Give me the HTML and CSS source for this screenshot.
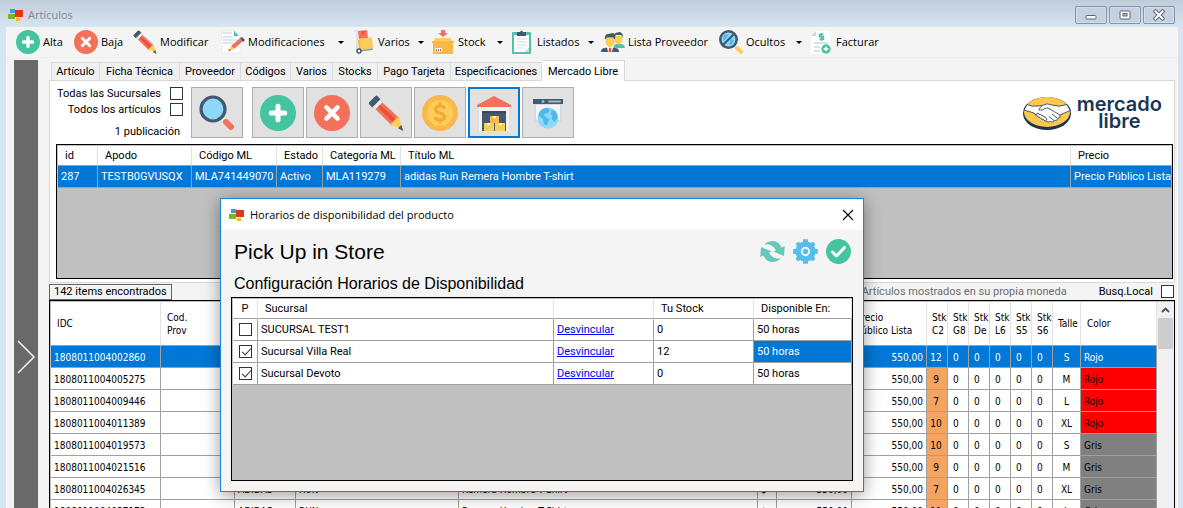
FILE: index.html
```html
<!DOCTYPE html>
<html lang="es">
<head>
  <meta charset="UTF-8" />
  <meta name="viewport" content="width=device-width, initial-scale=1.0"/>
  <title>Artículos</title>
  <link rel="stylesheet" href="styles.css">
</head>
<body>
  <svg class="sprite" aria-hidden="true">
    <symbol id="app" viewBox="0 0 16 14">
      <path fill="#3a9fd8" d="M2 1h5v4H2z"/>
      <path fill="#7cb521" d="M0 6h7v5H0z"/>
      <path fill="#fbb51c" d="M8 10h4v3H8z"/>
      <path fill="#e63312" d="M7 2h8v7H7z"/>
    </symbol>
    <symbol id="plus" viewBox="0 0 24 24">
      <circle cx="12" cy="12" r="12" fill="#44c4a1"/>
      <path d="M12 7.500v9M7.500 12h9" stroke="#fff" stroke-width="3.400" stroke-linecap="round"/>
    </symbol>
    <symbol id="cross" viewBox="0 0 24 24">
      <circle cx="12" cy="12" r="12" fill="#f3705a"/>
      <path d="M8.300 8.300l7.400 7.400M15.700 8.300l-7.400 7.400" stroke="#fff" stroke-width="3" stroke-linecap="round"/>
    </symbol>
    <symbol id="pencil" viewBox="0 0 24 24">
      <path fill="#f3705a" d="M4 8.500L8.500 4 21 15.500l-5 5z"/>
      <path fill="#e8503e" d="M5.500 7L7 5.500l12.500 11.500-2 2z"/>
      <path fill="#e8edf0" d="M3 7.500L7.500 3 9.500 5 5 9.500z"/>
      <path fill="#42596e" d="M.8 4.800L4.800.8Q5.600 0 6.400.8L8.300 2.800 2.800 8.300.8 6.200Q.2 5.500.8 4.800z"/>
      <path fill="#fdcd56" d="M15 19.500l5.500-5.500L23 22.800z"/>
      <path fill="#42596e" d="M20 22.200l2.200-2.200L23.500 24z"/>
    </symbol>
  </svg>

  <div class="window">
    <header class="titlebar">
      <svg class="app-icon" aria-hidden="true"><use href="#app"/></svg>
      <span class="caption">Artículos</span>
      <div class="window-buttons">
        <button aria-label="Minimizar"><svg width="12" height="12" viewBox="0 0 12 12"><rect x="1" y="6.500" width="10" height="3.500" rx="1" fill="#fff" stroke="#5b6376"/></svg></button>
        <button aria-label="Maximizar"><svg width="12" height="12" viewBox="0 0 12 12"><rect x="1" y="2" width="10" height="8" rx="1" fill="#fff" stroke="#5b6376"/><rect x="4" y="4.500" width="4" height="2.500" fill="#b6c2d2" stroke="#5b6376"/></svg></button>
        <button aria-label="Cerrar"><svg width="12" height="12" viewBox="0 0 12 12"><path d="M2.500 2.500l7 7M9.500 2.500l-7 7" stroke="#5b6376" stroke-width="4" stroke-linecap="square"/><path d="M2.500 2.500l7 7M9.500 2.500l-7 7" stroke="#fff" stroke-width="2" stroke-linecap="square"/></svg></button>
      </div>
    </header>

    <div class="client">
      <nav class="toolbar">
        <button><svg class="icon" aria-hidden="true"><use href="#plus"/></svg>Alta</button>
        <button><svg class="icon" aria-hidden="true"><use href="#cross"/></svg>Baja</button>
        <button><svg class="icon" aria-hidden="true"><use href="#pencil"/></svg>Modificar</button>
        <button class="drop">
          <svg class="icon" viewBox="0 0 24 24" aria-hidden="true">
            <path fill="#fff" stroke="#e3e3e3" stroke-width=".6" d="M1 1h12l6 5v17H1z"/>
            <path fill="#44c4a1" d="M13 1l5 5h-5z"/>
            <path stroke="#c3cedd" stroke-width="1.200" d="M2 3h9M2 7h9M2 10h14M2 13h11"/>
            <path fill="#f3705a" d="M10 16l9-8 3 3-9 8z"/>
            <path fill="#42596e" d="M19 8l2-1 3 3-2 2z"/>
            <path fill="#fdcd56" d="M10 16l3 3-5 2z"/>
            <path fill="#42596e" d="M8.500 19l1.500 1.500L7 21z"/>
          </svg>Modificaciones</button>
        <button class="drop">
          <svg class="icon" viewBox="0 0 24 24" aria-hidden="true">
            <path fill="none" stroke="#d5d9dd" stroke-width="1.500" d="M3 1h3v19"/>
            <path fill="#f3705a" d="M7 1l9-1 1 8-9 1z"/>
            <path fill="#d9503f" d="M11 1h2v3h-2z"/>
            <path fill="#f9b84b" d="M7 10l3-1 2 11-4 1z"/>
            <path fill="#fdcd56" d="M9 9l12-2 1 11-12 3z"/>
            <path stroke="#8c9bab" stroke-width="1.500" d="M9 21l13-2"/>
            <circle cx="8" cy="21" r="2" fill="#fff" stroke="#42596e" stroke-width="1.500"/>
          </svg>Varios</button>
        <button class="drop">
          <svg class="icon" viewBox="0 0 24 24" aria-hidden="true">
            <path fill="#f3705a" d="M10 0h4v3h3l-5 4-5-4h3z"/>
            <path fill="#fdcd56" d="M4 8h16l2 5H2z"/>
            <path fill="#f9b84b" d="M1 11h22v2H1zM2 13h20v11H2z"/>
            <path fill="#fff" d="M4 18h7v4H4z"/>
            <path stroke="#8b7355" d="M5.500 19v2.500M7.500 19v2.500M9.500 19v2.500"/>
          </svg>Stock</button>
        <button class="drop">
          <svg class="icon" viewBox="0 0 24 24" aria-hidden="true">
            <rect x="2" y="2" width="19" height="22" rx="1" fill="#52c0ab"/>
            <path fill="#fff" d="M4 5h15v13l-4 4H4z"/>
            <path fill="#d3dadd" d="M19 18v4h-4z"/>
            <path fill="#42596e" d="M7 2h3q1.500-3 3 0h3v4H7z"/>
            <path stroke="#d5d9dd" stroke-width="1.200" d="M6 9h11M6 12h11M6 15h11M6 18h7"/>
          </svg>Listados</button>
        <button>
          <svg class="icon" viewBox="0 0 24 24" aria-hidden="true">
            <path fill="#52c0ab" d="M13 17v-2l4-2 6 2 1 3H13z"/>
            <path fill="#fdcd56" d="M13.500 6h8v4q-1 4-4 4.500-3-.5-4-4.500z"/>
            <path fill="#42596e" d="M13 7.500q-1-4 3-5l3-.5q3 1 3 5l-2-2h-5z"/>
            <path fill="#42596e" d="M0 22q0-4 4-4l5-1 5 1q4 0 4 4z"/>
            <path fill="#fff" d="M6 17h6l-1 5H7z"/>
            <path fill="#e8503e" d="M8 18h2l.5 4h-3z"/>
            <path fill="#fdcd56" d="M4.500 8h9v5q-1 3-3 3.500L9 18l-1.500-1.500q-2-.5-3-3.500z"/>
            <path fill="#42596e" d="M4 9.500q-1-5 3-5.500l5-1q3 1 2 6.500l-2-2H6z"/>
          </svg>Lista Proveedor</button>
        <button class="drop">
          <svg class="icon" viewBox="0 0 24 24" aria-hidden="true">
            <path stroke="#dfe3e6" stroke-width="2" d="M14.500 14.500l3 3"/>
            <path stroke="#fdcd56" stroke-width="4" stroke-linecap="round" d="M18 18l4 4"/>
            <circle cx="9.500" cy="9.500" r="8.200" fill="#8dd7f7" stroke="#42596e" stroke-width="2.500"/>
            <path fill="#4bb9ec" d="M5 5l5-1-4 6-2 1zM12 9l3 1-3 5-2-1z"/>
            <path stroke="#42596e" stroke-width="2.200" d="M4 15L15 4"/>
          </svg>Ocultos</button>
        <button>
          <svg class="icon" viewBox="0 0 24 24" aria-hidden="true">
            <path fill="#fff" d="M7 1h14v23H2V6z"/>
            <path fill="#cfd8e2" d="M7 1v5H2z"/>
            <path stroke="#cfd8e2" stroke-width="1.300" d="M5 13h14M5 17h6M5 21h6"/>
            <path fill="none" stroke="#44c4a1" stroke-width="1.500" d="M14.500 4.500h-4v2.200h4v2.500h-4M12.500 3v8"/>
            <circle cx="17" cy="19" r="4.700" fill="#44c4a1"/>
            <path stroke="#fff" stroke-width="1.800" d="M17 16.700v4.600M14.700 19h4.600"/>
          </svg>Facturar</button>
      </nav>

      <div class="workspace">
        <button class="side-handle" aria-label="Mostrar panel"><svg width="18" height="34" viewBox="0 0 18 34"><path d="M1 1l16 16L1 33" fill="none" stroke="#fff" stroke-width="1.500"/></svg></button>

        <main class="main">
          <div class="tabs" role="tablist">
            <button role="tab">Artículo</button>
            <button role="tab">Ficha Técnica</button>
            <button role="tab">Proveedor</button>
            <button role="tab">Códigos</button>
            <button role="tab">Varios</button>
            <button role="tab">Stocks</button>
            <button role="tab">Pago Tarjeta</button>
            <button role="tab">Especificaciones</button>
            <button role="tab" class="active" aria-selected="true">Mercado Libre</button>
          </div>

          <section class="panel">
            <div class="actions">
              <div class="filters">
                <label>Todas las Sucursales <input type="checkbox"></label>
                <label>Todos los artículos <input type="checkbox"></label>
                <div class="count">1 publicación</div>
              </div>
              <button class="search" aria-label="Buscar">
                <svg viewBox="0 0 36 36" aria-hidden="true">
                  <path stroke="#e8edf0" stroke-width="4" d="M22 22l4 4"/>
                  <path stroke="#42596e" stroke-width="3" d="M20 20l3 3"/>
                  <path stroke="#f3705a" stroke-width="6" stroke-linecap="round" d="M27 27l5 5"/>
                  <circle cx="14" cy="14" r="12" fill="#8dd7f7" stroke="#42596e" stroke-width="3.200"/>
                </svg>
              </button>
              <button aria-label="Agregar"><svg aria-hidden="true"><use href="#plus"/></svg></button>
              <button aria-label="Eliminar"><svg aria-hidden="true"><use href="#cross"/></svg></button>
              <button aria-label="Editar"><svg aria-hidden="true"><use href="#pencil"/></svg></button>
              <button aria-label="Precios">
                <svg viewBox="0 0 36 36" aria-hidden="true">
                  <circle cx="18" cy="18" r="18" fill="#f9b84b"/>
                  <circle cx="18" cy="18" r="13" fill="#fdcd56"/>
                  <path fill="none" stroke="#f4a93a" stroke-width="3.200" d="M22.500 14q0-3-4.500-3t-4.500 3.200q0 2.800 4.500 3.800t4.500 3.800q0 3.200-4.500 3.200t-4.500-3M18 7.500V11M18 25v3.500"/>
                </svg>
              </button>
              <button class="focused" aria-label="Disponibilidad">
                <svg viewBox="0 0 36 36" aria-hidden="true">
                  <path fill="#f2f2f2" d="M3 11h30v25H3z"/>
                  <path fill="#f3705a" d="M18 1l17 9v2H1v-2z"/>
                  <path fill="#42596e" d="M6 16h24v20H6z"/>
                  <path fill="#344b60" d="M6 16h24v2H6z"/>
                  <path fill="#f9b84b" d="M14 21h9v7h-9z"/>
                  <path fill="#fdcd56" d="M8 28h10v8H8zM19 28h10v8H19z"/>
                  <path fill="#fff" d="M17 21h3v2h-3zM11 28h3v2h-3zM23 28h3v2h-3z"/>
                </svg>
              </button>
              <button aria-label="Ver en la web">
                <svg viewBox="0 0 36 36" aria-hidden="true">
                  <path fill="#d3dce6" d="M4 8h28v19H4z"/>
                  <path fill="#f4f4f4" d="M6 10h24v15H6z"/>
                  <path fill="#42596e" d="M3 4h30v5H3z"/>
                  <circle cx="13" cy="6.500" r="1.500" fill="#6cc9f3"/>
                  <path stroke="#a9b6c4" stroke-width="2" stroke-linecap="round" d="M19 6.500h11"/>
                  <circle cx="18" cy="23" r="10.500" fill="#8dd7f7"/>
                  <path fill="#4bb9ec" d="M9 18q3-5 8-5l3 2-2 3-4 1 1 3 4 2-2 6-3-1-1-5-4-3zM22 15l4 2 1.500 6-3 4-3-3 1-3-2-2z"/>
                </svg>
              </button>
              <div class="brand">
                <svg width="50" height="36" viewBox="0 0 50 36" aria-hidden="true">
                  <ellipse cx="25" cy="18.500" rx="24" ry="16.500" fill="#1a3654"/>
                  <ellipse cx="25" cy="17" rx="23" ry="15" fill="#fdc84e"/>
                  <path fill="#fff" stroke="#1a3654" stroke-width=".8" stroke-linejoin="round" d="M2 15q.5-3 3-5.500 5 2.500 11 1.500l4-.5q5-3 10-.5 7 2.500 15-.5 3 3 3.200 6L38 20q1 3-2 3.200-1 3-3.500 2.300-2 2.500-4 1-3 1.500-4.500-.5-2.500 0-3-2-2.500.5-3-1.500-3.500-.5-3-2.500-3-.5-3-2z"/>
                  <path fill="none" stroke="#1a3654" stroke-width=".8" d="M20 11q-4 3-3 4 3 1 7-2l2 0q7 4 12 7M13 20l2-1.500q2-.5 2 1 2-1 2.500 1 2-.5 2.500 1.500 2-.5 2 1.500 1.500 0 .5 2M30 19l5 4M27 21.500l5 4M5 9.500L2 15M45 9.500l3.200 6"/>
                </svg>
                <div class="brand-name">mercado<br>libre</div>
              </div>
            </div>

            <div class="grid publications">
              <table>
                <colgroup><col class="w40"><col class="w94"><col class="w85"><col class="w46"><col class="w78"><col><col class="w101"></colgroup>
                <thead><tr><th>id</th><th>Apodo</th><th>Código ML</th><th>Estado</th><th>Categoría ML</th><th>Título ML</th><th>Precio</th></tr></thead>
                <tbody><tr class="selected"><td>287</td><td>TESTB0GVUSQX</td><td>MLA741449070</td><td>Activo</td><td>MLA119279</td><td>adidas Run Remera Hombre T-shirt</td><td>Precio Público Lista</td></tr></tbody>
              </table>
            </div>
          </section>

          <div class="status">
            <div class="found">142 items encontrados</div>
            <div class="hint">Artículos mostrados en su propia moneda</div>
            <label>Busq.Local <input type="checkbox"></label>
          </div>

          <div class="grid articles">
            <table>
              <colgroup><col class="w110"><col class="w74"><col class="w61"><col class="w163"><col><col class="w19"><col class="w75"><col class="w75"><col class="w21"><col class="w21"><col class="w21"><col class="w21"><col class="w21"><col class="w21"><col class="w28"><col class="w76"></colgroup>
              <thead><tr><th>IDC</th><th>Cod.<br>Prov</th><th>Marca</th><th>Línea</th><th>Descripción</th><th></th><th>Costo</th><th class="price">Precio<br>Público Lista</th><th class="stk">Stk<br>C2</th><th class="stk">Stk<br>G8</th><th class="stk">Stk<br>De</th><th class="stk">Stk<br>L6</th><th class="stk">Stk<br>S5</th><th class="stk">Stk<br>S6</th><th class="stk">Talle</th><th>Color</th></tr></thead>
              <tbody>
                <tr class="selected"><td>1808011004002860</td><td></td><td>ADIDAS</td><td>RUN</td><td>Remera Hombre T-Shirt</td><td>$</td><td class="num">550,00</td><td class="num">550,00</td><td class="own">12</td><td class="qty">0</td><td class="qty">0</td><td class="qty">0</td><td class="qty">0</td><td class="qty">0</td><td class="size">S</td><td>Rojo</td></tr>
                <tr><td>1808011004005275</td><td></td><td>ADIDAS</td><td>RUN</td><td>Remera Hombre T-Shirt</td><td>$</td><td class="num">550,00</td><td class="num">550,00</td><td class="own">9</td><td class="qty">0</td><td class="qty">0</td><td class="qty">0</td><td class="qty">0</td><td class="qty">0</td><td class="size">M</td><td class="red">Rojo</td></tr>
                <tr><td>1808011004009446</td><td></td><td>ADIDAS</td><td>RUN</td><td>Remera Hombre T-Shirt</td><td>$</td><td class="num">550,00</td><td class="num">550,00</td><td class="own">7</td><td class="qty">0</td><td class="qty">0</td><td class="qty">0</td><td class="qty">0</td><td class="qty">0</td><td class="size">L</td><td class="red">Rojo</td></tr>
                <tr><td>1808011004011389</td><td></td><td>ADIDAS</td><td>RUN</td><td>Remera Hombre T-Shirt</td><td>$</td><td class="num">550,00</td><td class="num">550,00</td><td class="own">10</td><td class="qty">0</td><td class="qty">0</td><td class="qty">0</td><td class="qty">0</td><td class="qty">0</td><td class="size">XL</td><td class="red">Rojo</td></tr>
                <tr><td>1808011004019573</td><td></td><td>ADIDAS</td><td>RUN</td><td>Remera Hombre T-Shirt</td><td>$</td><td class="num">550,00</td><td class="num">550,00</td><td class="own">10</td><td class="qty">0</td><td class="qty">0</td><td class="qty">0</td><td class="qty">0</td><td class="qty">0</td><td class="size">S</td><td class="gray">Gris</td></tr>
                <tr><td>1808011004021516</td><td></td><td>ADIDAS</td><td>RUN</td><td>Remera Hombre T-Shirt</td><td>$</td><td class="num">550,00</td><td class="num">550,00</td><td class="own">9</td><td class="qty">0</td><td class="qty">0</td><td class="qty">0</td><td class="qty">0</td><td class="qty">0</td><td class="size">M</td><td class="gray">Gris</td></tr>
                <tr><td>1808011004026345</td><td></td><td>ADIDAS</td><td>RUN</td><td>Remera Hombre T-Shirt</td><td>$</td><td class="num">550,00</td><td class="num">550,00</td><td class="own">7</td><td class="qty">0</td><td class="qty">0</td><td class="qty">0</td><td class="qty">0</td><td class="qty">0</td><td class="size">XL</td><td class="gray">Gris</td></tr>
                <tr><td>1808011004027172</td><td></td><td>ADIDAS</td><td>RUN</td><td>Remera Hombre T-Shirt</td><td>$</td><td class="num">550,00</td><td class="num">550,00</td><td class="own">11</td><td class="qty">0</td><td class="qty">0</td><td class="qty">0</td><td class="qty">0</td><td class="qty">0</td><td class="size">L</td><td class="gray">Gris</td></tr>
              </tbody>
            </table>
            <div class="scrollbar">
              <button aria-label="Subir"><svg width="9" height="6" viewBox="0 0 9 6"><path d="M1 5l3.500-3.500L8 5" fill="none" stroke="#505050" stroke-width="1.800"/></svg></button>
              <div class="thumb"></div>
            </div>
          </div>
        </main>
      </div>
    </div>
  </div>

  <div class="dialog" role="dialog" aria-labelledby="dialog-caption">
    <div class="dialog-bar">
      <svg class="app-icon" aria-hidden="true"><use href="#app"/></svg>
      <span class="caption" id="dialog-caption">Horarios de disponibilidad del producto</span>
      <button aria-label="Cerrar"><svg width="12" height="12" viewBox="0 0 12 12"><path d="M1 1l10 10M11 1L1 11" stroke="#000" stroke-width="1.100"/></svg></button>
    </div>
    <div class="dialog-body">
      <div class="dialog-head">
        <h1>Pick Up in Store</h1>
        <button aria-label="Actualizar">
          <svg viewBox="0 0 25 25" aria-hidden="true">
            <path fill="#68c8b8" d="M4 5.500Q8 2 13 2q6 .3 8.500 6.500L24.700 7 24 17 13.500 12.500l2.500-1.300Q12 4.500 4 5.500z"/>
            <path fill="#68c8b8" d="M21 19.500Q17 23 12 23q-6-.3-8.500-6.500L.3 18 1 8l10.500 4.500L9 13.800q4 6.700 12 5.700z"/>
          </svg>
        </button>
        <button aria-label="Configurar">
          <svg viewBox="0 0 25 25" aria-hidden="true">
            <g fill="none" stroke="#56bdec">
              <circle cx="12.500" cy="12.500" r="7.400" stroke-width="5.400"/>
              <path stroke-width="5" stroke-linejoin="round" d="M12.500 .2v4M12.500 20.800v4M.2 12.500h4M20.800 12.500h4"/>
              <path stroke-width="4.500" stroke-linecap="round" d="M5.300 5.300l2 2M17.700 17.700l2 2M19.700 5.300l-2 2M7.300 17.700l-2 2"/>
            </g>
            <circle cx="12.500" cy="12.500" r="2.700" fill="#56bdec"/>
          </svg>
        </button>
        <button aria-label="Aceptar">
          <svg viewBox="0 0 25 25" aria-hidden="true">
            <circle cx="12.500" cy="12.500" r="12.500" fill="#44c4a1"/>
            <path fill="none" stroke="#fff" stroke-width="3" stroke-linecap="round" stroke-linejoin="round" d="M6.500 13l4 4 8-8.500"/>
          </svg>
        </button>
      </div>
      <h2>Configuración Horarios de Disponibilidad</h2>
      <div class="grid stores">
        <table>
          <colgroup><col class="w25"><col><col class="w100"><col class="w100"><col class="w98"></colgroup>
          <thead><tr><th class="pick">P</th><th>Sucursal</th><th></th><th>Tu Stock</th><th>Disponible En:</th></tr></thead>
          <tbody>
            <tr><td class="pick"><input type="checkbox" aria-label="SUCURSAL TEST1"></td><td>SUCURSAL TEST1</td><td><a href="#">Desvincular</a></td><td>0</td><td>50 horas</td></tr>
            <tr><td class="pick"><input type="checkbox" aria-label="Sucursal Villa Real" checked></td><td>Sucursal Villa Real</td><td><a href="#">Desvincular</a></td><td>12</td><td class="selected">50 horas</td></tr>
            <tr><td class="pick"><input type="checkbox" aria-label="Sucursal Devoto" checked></td><td>Sucursal Devoto</td><td><a href="#">Desvincular</a></td><td>0</td><td>50 horas</td></tr>
          </tbody>
        </table>
      </div>
    </div>
  </div>
</body>
</html>
```
FILE: styles.css
```css
* {
  box-sizing: border-box;
}
body {
  margin: 0;
  height: 100vh;
  overflow: hidden;
  font-family: Roboto, 'Liberation Sans', Arial, sans-serif;
  font-size: 11px;
  color: #000;
  background-color: #d7e4f2;
}
button {
  margin: 0;
  padding: 0;
  border: none;
  background: none;
  font: inherit;
  color: inherit;
}
svg {
  display: block;
  flex: none;
}
.sprite {
  display: none;
}
.app-icon {
  width: 16px;
  height: 14px;
}
input[type="checkbox"] {
  appearance: none;
  position: relative;
  flex: none;
  width: 13px;
  height: 13px;
  margin: 0;
  border: 1px solid #333;
  background-color: #fff;
}
input[type="checkbox"]:checked::after {
  content: '';
  position: absolute;
  left: 4px;
  top: 0;
  width: 4px;
  height: 8px;
  border: solid #333;
  border-width: 0 1px 1px 0;
  transform: rotate(42deg);
}

/* main window */
.window {
  display: flex;
  flex-direction: column;
  height: 100vh;
}
.titlebar {
  display: flex;
  align-items: center;
  gap: 4px;
  height: 27px;
  padding: 2px 8px 0;
  background: linear-gradient(#bfcddb, #d7e4f2);
}
.caption {
  font-family: 'Open Sans', 'Noto Sans', sans-serif;
  font-size: 11px;
}
.titlebar .caption {
  flex: 1;
  color: #85898e;
}
.window-buttons {
  display: flex;
  gap: 2px;
}
.window-buttons button {
  display: flex;
  align-items: center;
  justify-content: center;
  width: 32px;
  height: 18px;
  border: 1px solid #8593aa;
  border-radius: 2px;
  background-color: #c4d1e1;
  box-shadow: inset 0 0 0 1px #d3deeb;
}
.client {
  display: flex;
  flex-direction: column;
  flex: 1;
  min-height: 0;
  margin: 0 5px 0 6px;
  background-color: #f4f4f4;
}
.toolbar {
  display: grid;
  grid-template-columns: 58px 59px 88px 130px 80px 79px 91px 118px 90px auto;
  height: 31px;
  padding-left: 10px;
  border-bottom: 1px solid #efefef;
}
.toolbar button {
  display: flex;
  align-items: center;
  gap: 3px;
  font-family: 'Open Sans', 'Noto Sans', sans-serif;
  line-height: 14px;
  white-space: nowrap;
}
.toolbar .icon {
  width: 24px;
  height: 24px;
}
.toolbar .drop::after {
  content: '';
  margin: 0 7px 0 auto;
  border: 3px solid transparent;
  border-top-color: #000;
  border-bottom: none;
}
.workspace {
  display: flex;
  flex: 1;
  gap: 11px;
  min-height: 0;
  padding: 2px 3px 0 8px;
}
.side-handle {
  display: flex;
  flex: none;
  justify-content: center;
  align-items: center;
  width: 24px;
  padding-top: 146px;
  background-color: #696969;
}
.main {
  display: flex;
  flex-direction: column;
  flex: 1;
  min-width: 0;
}

/* tabs */
.tabs {
  display: grid;
  grid-template-columns: 49px 80px 61px 50px 42px 45px 73px 91px 83px;
  align-items: end;
  height: 21px;
  margin-bottom: -1px;
  padding-left: 2px;
  z-index: 1;
}
.tabs button {
  height: 19px;
  border: 1px solid #d9d9d9;
  border-left: none;
  background-color: #f0f0f0;
  white-space: nowrap;
}
.tabs button:first-child {
  border-left: 1px solid #d9d9d9;
}
.tabs .active {
  height: 21px;
  border-bottom: none;
  background-color: #fff;
}

/* publications panel */
.panel {
  padding: 6px 1px 3px 6px;
  border: 1px solid #d9d9d9;
  background-color: #fff;
}
.actions {
  display: flex;
  gap: 2px;
  height: 51px;
  margin-bottom: 6px;
}
.filters {
  display: flex;
  flex-direction: column;
  align-items: flex-end;
  gap: 3px;
  width: 127px;
  margin-right: 6px;
}
.filters label {
  display: flex;
  align-items: center;
  gap: 9px;
  height: 13px;
  white-space: nowrap;
}
.count {
  padding: 6px 3px 0 0;
}
.actions button {
  display: flex;
  align-items: center;
  justify-content: center;
  flex: none;
  width: 52px;
  height: 51px;
  border: 1px solid #adadad;
  background-color: #e1e1e1;
}
.actions button svg {
  width: 36px;
  height: 36px;
}
.actions .search {
  margin-right: 7px;
}
.actions .focused {
  border: 2px solid #0078d7;
}
.brand {
  display: flex;
  align-items: center;
  gap: 5px;
  margin-left: auto;
  padding-right: 11px;
}
.brand-name {
  font-family: Inter, 'Open Sans', sans-serif;
  font-size: 20px;
  font-weight: 600;
  line-height: 17px;
  text-align: center;
  color: #1a3654;
}

/* data grids */
.grid {
  overflow: hidden;
  padding: 1px 0 1px 1px;
  border: 1px solid #000;
  background-color: #c0c0c0;
}
.grid table {
  width: 100%;
  table-layout: fixed;
  border-collapse: separate;
  border-spacing: 0;
}
.grid th,
.grid td {
  overflow: hidden;
  padding: 0 3px;
  border: solid #a0a0a0;
  border-width: 0 1px 1px 0;
  background-color: #fff;
  text-align: left;
  white-space: nowrap;
}
.grid th {
  height: 20px;
  padding: 0 7px;
  border-right-color: #e2e2e2;
  font-weight: normal;
}
.grid td {
  height: 22px;
}
.grid .selected,
.grid .selected td {
  background-color: #0078d7;
  color: #fff;
}
.grid .pick {
  padding: 0;
  text-align: center;
}
.pick input {
  display: block;
  margin: 0 auto;
}
.publications {
  height: 135px;
}
.status {
  display: flex;
  align-items: center;
  height: 17px;
}
.found {
  padding: 0 4px;
  border: 1px solid #646464;
  line-height: 14px;
}
.hint {
  margin-left: auto;
  color: #6d6d6d;
}
.status label {
  display: flex;
  align-items: center;
  gap: 8px;
  margin-left: 32px;
  padding-right: 1px;
}
.articles {
  display: flex;
  flex: 1;
  min-height: 0;
  padding: 1px 0 0 1px;
  border-bottom: none;
  font-family: 'DejaVu Sans Condensed', 'DejaVu Sans', sans-serif;
  font-size: 10px;
}
.articles table {
  flex: 1;
  align-self: flex-start;
  width: auto;
  min-width: 0;
}
.articles th {
  height: 44px;
  padding: 0 6px;
  line-height: 13px;
}
.articles td {
  padding-top: 1px;
}
.articles .price {
  padding-left: 4px;
}
.articles .stk {
  padding: 0 0 0 5px;
}
.articles .num {
  text-align: right;
}
.articles .qty {
  padding-left: 5px;
}
.articles .size {
  text-align: center;
}
.articles .own {
  padding-right: 5px;
  background-color: #f4a460;
  text-align: center;
}
.articles .red {
  background-color: #f00;
}
.articles .gray {
  background-color: #808080;
}
.scrollbar {
  flex: none;
  width: 17px;
  background-color: #f0f0f0;
}
.scrollbar button {
  display: flex;
  align-items: center;
  justify-content: center;
  width: 17px;
  height: 16px;
}
.thumb {
  height: 31px;
  margin: 0 1px;
  background-color: #cdcdcd;
}

/* pick up dialog */
.dialog {
  position: absolute;
  left: 220px;
  top: 198px;
  width: 644px;
  z-index: 2;
  border: 1px solid #1883d7;
  background-color: #f4f4f4;
  box-shadow: 0 3px 16px rgba(0,0,0,0.4);
}
.dialog-bar {
  display: flex;
  align-items: center;
  gap: 5px;
  height: 31px;
  padding: 0 9px 0 8px;
  background-color: #fff;
}
.dialog-bar button {
  margin-left: auto;
}
.dialog-body {
  padding: 9px 10px 10px;
}
.dialog-head {
  display: flex;
  align-items: center;
  gap: 8px;
  height: 25px;
  padding: 0 2px 0 3px;
}
.dialog h1,
.dialog h2 {
  margin: 0;
  font-family: 'Liberation Sans', Arial, sans-serif;
  font-weight: normal;
}
.dialog h1 {
  flex: 1;
  font-size: 21px;
}
.dialog-head svg {
  width: 25px;
  height: 25px;
}
.dialog h2 {
  padding: 10px 3px 4px;
  font-size: 16px;
  line-height: 19px;
}
.stores {
  height: 184px;
}
.stores a {
  color: #00f;
}

/* column widths */
.w19 { width: 19px; }
.w21 { width: 21px; }
.w25 { width: 25px; }
.w28 { width: 28px; }
.w40 { width: 40px; }
.w46 { width: 46px; }
.w61 { width: 61px; }
.w74 { width: 74px; }
.w75 { width: 75px; }
.w76 { width: 76px; }
.w78 { width: 78px; }
.w85 { width: 85px; }
.w94 { width: 94px; }
.w98 { width: 98px; }
.w100 { width: 100px; }
.w101 { width: 101px; }
.w110 { width: 110px; }
.w163 { width: 163px; }
```
